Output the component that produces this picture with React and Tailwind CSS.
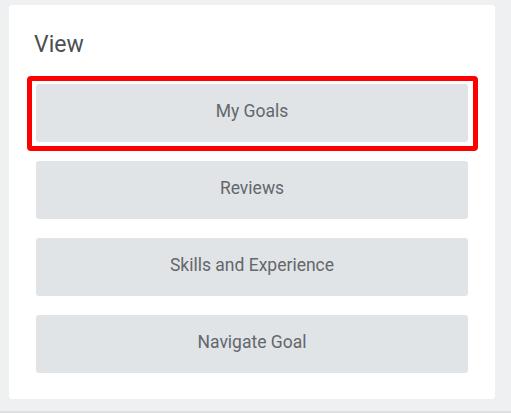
import React from 'react'

const items = ['My Goals', 'Reviews', 'Skills and Experience', 'Navigate Goal']

const btn = 'h-[58px] w-full rounded-[3px] bg-[#e0e4e7] pb-[3px] text-[17.5px] text-[#63676b]'

const App = () => {
	return (
		<div className="w-[511px] h-[413px] bg-[#eff0f2] border-b-2 border-[#dcdee0] pt-[5px] pl-[9px]" style={{ fontFamily: 'Roboto, "Liberation Sans", sans-serif' }}>
			<div className="w-[486px] h-[394px] bg-white rounded-[3px] pt-[26px]">
				<h2 className="text-[23px] leading-[28px] text-[#4b4f54] ml-[25px]">View</h2>
				<div className="mt-[25px] mx-[27px] flex flex-col gap-[19px]">
					{items.map((label, i) =>
						i === 0 ? (
							<div key={label} className="-mt-[8px] -mb-[9px] -ml-[9px] -mr-[10px] border-[5px] border-[#ff0000] rounded-[4px] pt-[3px] pb-[4px] pl-[4px] pr-[5px]">
								<button className={btn}>{label}</button>
							</div>
						) : (
							<button key={label} className={btn}>
								{label}
							</button>
						)
					)}
				</div>
			</div>
		</div>
	)
}

export default App
